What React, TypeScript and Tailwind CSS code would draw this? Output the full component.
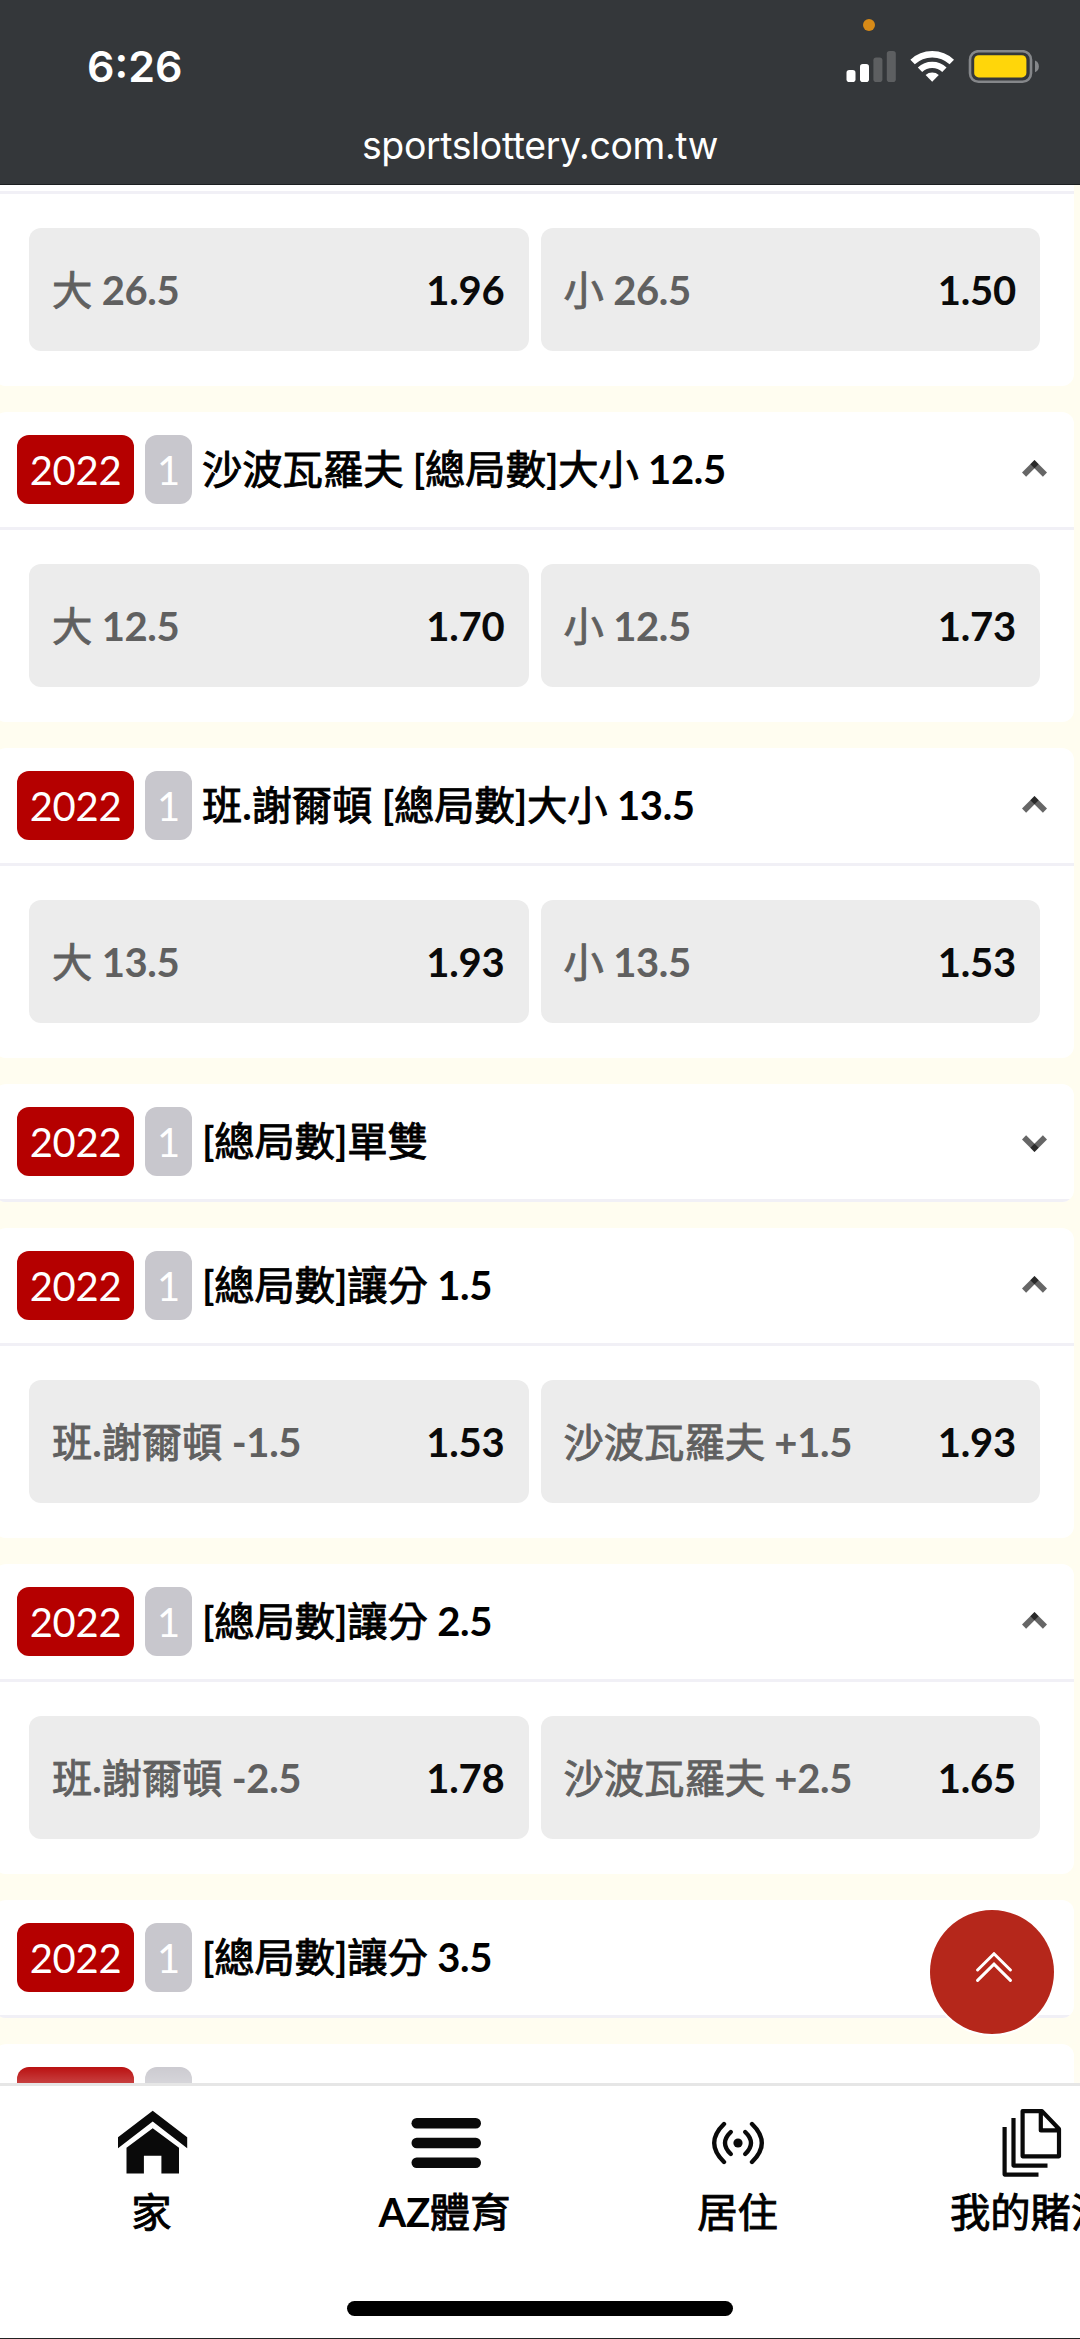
const LATO = "font-['Lato','Noto_Sans_CJK_TC',sans-serif]";

type Option = { label: string; price: string };
type Market = { title: string; open: boolean; clipped?: boolean; options?: Option[] };

const markets: Market[] = [
  { title: "沙波瓦羅夫 [總局數]大小 12.5", open: true, options: [{ label: "大 12.5", price: "1.70" }, { label: "小 12.5", price: "1.73" }] },
  { title: "班.謝爾頓 [總局數]大小 13.5", open: true, options: [{ label: "大 13.5", price: "1.93" }, { label: "小 13.5", price: "1.53" }] },
  { title: "[總局數]單雙", open: false },
  { title: "[總局數]讓分 1.5", open: true, options: [{ label: "班.謝爾頓 -1.5", price: "1.53" }, { label: "沙波瓦羅夫 +1.5", price: "1.93" }] },
  { title: "[總局數]讓分 2.5", open: true, options: [{ label: "班.謝爾頓 -2.5", price: "1.78" }, { label: "沙波瓦羅夫 +2.5", price: "1.65" }] },
  { title: "[總局數]讓分 3.5", open: false },
  { title: "", open: false, clipped: true },
];

// Latin runs are bold; Han runs use the regular face with a thin stroke for a medium weight.
function Mixed({ text }: { text: string }) {
  const runs = text.match(/[\u4e00-\u9fff]+|[^\u4e00-\u9fff]+/g) ?? [];
  return (
    <>
      {runs.map((run, i) =>
        /[\u4e00-\u9fff]/.test(run) ? (
          <span key={i} className="text-[40.3px] font-normal [-webkit-text-stroke:0.9px_currentColor]">{run}</span>
        ) : (
          <span key={i} className="font-bold tracking-[-0.35px] whitespace-pre">{run}</span>
        ),
      )}
    </>
  );
}

function Chevron({ open }: { open: boolean }) {
  return (
    <svg width="25" height="17" viewBox="0 -0.5 25 17" className={open ? "mb-[3px]" : "mt-[3px] rotate-180"}>
      <g stroke="#000" strokeOpacity="0.6" strokeWidth="5.8">
        <path d="M2.05 14.15 L14.55 1.65" />
        <path d="M22.95 14.15 L10.45 1.65" />
      </g>
    </svg>
  );
}

function Odds({ options }: { options: Option[] }) {
  return (
    <div className="flex gap-3 pt-[34px] pr-[34px] pb-[35px] pl-[35px]">
      {options.map((o) => (
        <div key={o.label} className="flex h-[123px] flex-1 items-center justify-between rounded-[12px] bg-[#ececec] pr-[24px] pl-[23px]">
          <span className="text-[#606060]"><Mixed text={o.label} /></span>
          <span className="font-bold tracking-[-0.2px] text-[#0a0a0a]">{o.price}</span>
        </div>
      ))}
    </div>
  );
}

function Card({ m }: { m: Market }) {
  return (
    <section className="shrink-0 overflow-hidden rounded-[12px] bg-white">
      <header className="flex h-[118px] items-center border-b-3 border-[#f1f0f6] pr-[27px] pl-[23px]">
        <span className="flex h-[69px] w-[117px] items-center justify-center rounded-[12px] bg-[#b50000] pt-px font-normal tracking-[-0.3px] text-white">{m.clipped ? "" : "2022"}</span>
        <span className="ml-[11px] flex h-[69px] w-[47px] items-center justify-center rounded-[12px] bg-[#c8c7cd] pt-px font-normal text-white">{m.clipped ? "" : "1"}</span>
        <h2 className="ml-[10px] flex-1 pb-px whitespace-nowrap"><Mixed text={m.title} /></h2>
        <Chevron open={m.open} />
      </header>
      {m.options && <Odds options={m.options} />}
    </section>
  );
}

function StatusBar() {
  return (
    <div className="relative flex h-[185px] shrink-0 flex-col border-b border-[#1c1f21] bg-[#34373a] font-['Inter',sans-serif] text-white">
      <div className="flex h-[108px] items-start justify-between pt-[40px] pr-[41px] pl-[87px]">
        <span className="text-[43px] leading-[52px] font-semibold">6:26</span>
        <svg width="193" height="34" viewBox="846 50 193 34" className="mt-[10px]">
          <rect x="846.5" y="70" width="9" height="12" rx="2.8" fill="#fff" />
          <rect x="860" y="64" width="9" height="18" rx="2.8" fill="#fff" />
          <rect x="873.4" y="57.5" width="9" height="24.5" rx="2.8" fill="#5d5f61" />
          <rect x="886.8" y="51" width="9" height="31" rx="2.8" fill="#5d5f61" />
          <g fill="none" stroke="#fff">
            <path d="M912.6 62 A 28.5 28.5 0 0 1 951.8 62" strokeWidth="6.4" />
            <path d="M920 69.8 A 17.5 17.5 0 0 1 944.4 69.8" strokeWidth="6.2" />
          </g>
          <path d="M932.2 81.7 L925.6 75 A 10 10 0 0 1 938.8 75 Z" fill="#fff" />
          <rect x="970" y="51.2" width="61" height="30.6" rx="8.5" fill="none" stroke="#85878a" strokeWidth="2.6" />
          <rect x="974.2" y="55.2" width="52.2" height="22.2" rx="4.5" fill="#ffd60a" />
          <path d="M1035 60.5 Q1038.9 62.3 1038.9 66.4 Q1038.9 70.5 1035 72.3 Z" fill="#85878a" />
        </svg>
      </div>
      <div className="text-center text-[37.4px] leading-[77px] font-normal tracking-[-0.36px] [font-variant-ligatures:none]">sportslottery.com.tw</div>
      <span className="absolute top-[19px] left-[863px] size-3 rounded-full bg-[#d78a17]" />
    </div>
  );
}

function NavItem({ label, children }: { label: string; children: React.ReactNode }) {
  return (
    <div className="flex w-[293px] shrink-0 flex-col items-center">
      <div className="flex h-[72px] items-center">{children}</div>
      <span className="mt-[8px] -ml-[2px] leading-[50px] whitespace-nowrap"><Mixed text={label} /></span>
    </div>
  );
}

function BottomNav() {
  return (
    <nav className="relative flex h-[256px] shrink-0 flex-col items-center border-t-3 border-b border-t-[#e6e6e6] border-b-[#222] bg-white">
      <div className="absolute inset-x-0 -top-[25px] h-[22px] bg-linear-to-b from-white/0 to-white/25" />
      <div className="flex w-full flex-1 overflow-hidden pt-[21px] pl-[6px] text-black">
        <NavItem label="家">
          <svg width="70" height="66" viewBox="118 2110 70 66" fill="#0a0a0a">
            <path d="M152.7 2110.7 L187.2 2137.3 V2148.3 L152.7 2121.6 L118 2148.3 V2137.3 Z" />
            <path d="M152.7 2128.2 L179 2147.8 V2173.6 H161.4 V2155.8 H143.9 V2173.6 H126.5 V2147.8 Z" />
          </svg>
        </NavItem>
        <NavItem label="AZ體育">
          <svg width="70" height="50" viewBox="-0.5 0 70 50" fill="#0a0a0a">
            <rect y="0" width="69.5" height="10.4" rx="5.2" />
            <rect y="19.8" width="69.5" height="10.4" rx="5.2" />
            <rect y="39.5" width="69.5" height="10.4" rx="5.2" />
          </svg>
        </NavItem>
        <NavItem label="居住">
          <svg width="54" height="44" viewBox="-26 -22 54 44" fill="none" stroke="#0a0a0a" strokeWidth="4.4" strokeLinecap="round">
            <circle r="4.6" fill="#0a0a0a" stroke="none" />
            <path d="M-7.2 -11 Q-18.8 0 -7.2 11 M7.2 -11 Q18.8 0 7.2 11" />
            <path d="M-14 -19 Q-33.6 0 -14 19 M14 -19 Q33.6 0 14 19" />
          </svg>
        </NavItem>
        <NavItem label="我的賭注">
          <svg width="60" height="70" viewBox="0 0 60 70" fill="none" stroke="#0a0a0a" strokeWidth="4.2" strokeLinejoin="round">
            <path d="M20.6 3.1 H40 L57 21 V48.3 H20.6 Z M38.8 3.1 V22.4 H57" />
            <path d="M11.5 10 V57.6 H45.5 M2.6 19 V66.6 H36.5" />
          </svg>
        </NavItem>
      </div>
      <div className="mb-[22px] h-[15px] w-[386px] shrink-0 rounded-full bg-black" />
    </nav>
  );
}

export default function App() {
  return (
    <div className={`${LATO} relative flex h-[2339px] w-[1080px] flex-col overflow-hidden bg-[#fffdf0] text-[40px] leading-[50px] text-black`}>
      <StatusBar />
      <main className="-ml-[6px] flex min-h-0 w-[1080px] flex-1 flex-col gap-[26px] overflow-hidden">
        <section className="shrink-0 rounded-b-[12px] bg-white">
          <div className="h-[9px] border-b-3 border-[#f1f0f6]" />
          <Odds options={[{ label: "大 26.5", price: "1.96" }, { label: "小 26.5", price: "1.50" }]} />
        </section>
        {markets.map((m, i) => (
          <Card key={i} m={m} />
        ))}
      </main>
      <button className="absolute top-[1910px] left-[930px] flex size-[124px] items-center justify-center rounded-full bg-[#b5271b] pb-[11px] pl-[3px] shadow-[0_0_0_2px_#fff]">
        <svg width="36" height="30" viewBox="0 0 36 30" fill="none" stroke="#fff" strokeWidth="3" strokeLinecap="round">
          <path d="M1.6 18 L18 1.8 L34.4 18 M1.6 28.4 L18 12.2 L34.4 28.4" />
        </svg>
      </button>
      <BottomNav />
    </div>
  );
}
